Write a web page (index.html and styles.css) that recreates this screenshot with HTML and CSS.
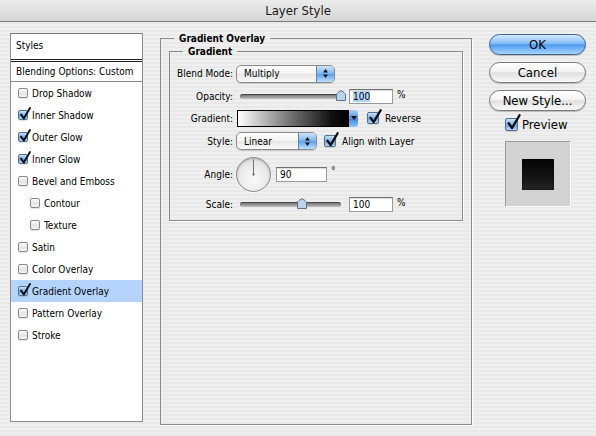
FILE: index.html
```html
<!DOCTYPE html>
<html lang="en">
	<head>
		<meta charset="utf-8" />
		<title>Layer Style</title>
		<link rel="stylesheet" href="styles.css">
	</head>
	<body>
		<div class="titlebar">Layer Style</div>
		<div class="content">
			<div class="style-list">
				<div class="list-head">Styles</div>
				<div class="list-blend">Blending Options: Custom</div>
				<ul class="effects">
					<li><span class="check"></span>Drop Shadow</li>
					<li><span class="check on"><svg viewBox="0 0 12 14"><path d="M2 7.5 L4.8 11.5 L11 1" /></svg></span>Inner Shadow</li>
					<li><span class="check on"><svg viewBox="0 0 12 14"><path d="M2 7.5 L4.8 11.5 L11 1" /></svg></span>Outer Glow</li>
					<li><span class="check on"><svg viewBox="0 0 12 14"><path d="M2 7.5 L4.8 11.5 L11 1" /></svg></span>Inner Glow</li>
					<li><span class="check"></span>Bevel and Emboss</li>
					<li class="sub"><span class="check"></span>Contour</li>
					<li class="sub"><span class="check"></span>Texture</li>
					<li><span class="check"></span>Satin</li>
					<li><span class="check"></span>Color Overlay</li>
					<li class="selected"><span class="check on"><svg viewBox="0 0 12 14"><path d="M2 7.5 L4.8 11.5 L11 1" /></svg></span>Gradient Overlay</li>
					<li><span class="check"></span>Pattern Overlay</li>
					<li><span class="check"></span>Stroke</li>
				</ul>
			</div>

			<fieldset class="panel">
				<legend>Gradient Overlay</legend>
				<fieldset class="group">
					<legend>Gradient</legend>
					<div class="form-grid">
						<label>Blend Mode:</label>
						<div class="ctrl">
							<span class="popup popup-blend">Multiply<span class="stepper"><svg viewBox="0 0 7 11"><path d="M3.5 1 L6 4.5 L1 4.5Z M1 6.5 L6 6.5 L3.5 10Z" /></svg></span></span>
						</div>

						<label>Opacity:</label>
						<div class="ctrl">
							<div class="slider">
								<span class="track"></span>
								<svg class="thumb" style="left: 100px" viewBox="0 0 10 11"><path d="M0.5 10.5 L0.5 5 Q0.5 3.5 2 2.5 L5 0.5 L8 2.5 Q9.5 3.5 9.5 5 L9.5 10.5 Z" /></svg>
							</div>
							<span class="field"><span class="sel">100</span></span>
							<span class="unit">%</span>
						</div>

						<label>Gradient:</label>
						<div class="ctrl">
							<span class="swatch"><span class="ramp"></span><span class="drop"><svg viewBox="0 0 6 4"><path d="M0 0 L6 0 L3 4Z" /></svg></span></span>
							<span class="check big on reverse"><svg viewBox="0 0 12 14"><path d="M2 7.5 L4.8 11.5 L11 1" /></svg></span>
							<span class="opt">Reverse</span>
						</div>

						<label>Style:</label>
						<div class="ctrl">
							<span class="popup popup-style">Linear<span class="stepper"><svg viewBox="0 0 7 11"><path d="M3.5 1 L6 4.5 L1 4.5Z M1 6.5 L6 6.5 L3.5 10Z" /></svg></span></span>
							<span class="check big on align"><svg viewBox="0 0 12 14"><path d="M2 7.5 L4.8 11.5 L11 1" /></svg></span>
							<span class="opt">Align with Layer</span>
						</div>

						<label>Angle:</label>
						<div class="ctrl">
							<span class="dial"><svg viewBox="0 0 35 35"><line x1="17.5" y1="17.5" x2="17.5" y2="1.5" /><rect x="16.5" y="16.5" width="2" height="2" /></svg></span>
							<span class="field field-angle">90</span>
							<span class="deg">°</span>
						</div>

						<label>Scale:</label>
						<div class="ctrl">
							<div class="slider">
								<span class="track"></span>
								<svg class="thumb" style="left: 61px" viewBox="0 0 10 11"><path d="M0.5 10.5 L0.5 5 Q0.5 3.5 2 2.5 L5 0.5 L8 2.5 Q9.5 3.5 9.5 5 L9.5 10.5 Z" /></svg>
							</div>
							<span class="field">100</span>
							<span class="unit">%</span>
						</div>
					</div>
				</fieldset>
			</fieldset>

			<div class="actions">
				<button class="btn btn-default">OK</button>
				<button class="btn">Cancel</button>
				<button class="btn">New Style...</button>
				<div class="preview-toggle">
					<span class="check large on"><svg viewBox="0 0 12 14"><path d="M2 7.5 L4.8 11.5 L11 1" /></svg></span>Preview
				</div>
				<div class="preview-box"><div class="preview-swatch"></div></div>
			</div>
		</div>
	</body>
</html>
```

FILE: styles.css
```css
* {
	box-sizing: border-box;
}
html,
body {
	margin: 0;
	padding: 0;
}
body {
	width: 596px;
	height: 436px;
	overflow: hidden;
	font-family: "DejaVu Sans Condensed", "Liberation Sans", sans-serif;
	font-size: 10px;
	color: #000;
	background: repeating-linear-gradient(#efefef 0 2px, #e9e9e9 2px 4px);
}

/* title bar */
.titlebar {
	height: 22px;
	line-height: 21px;
	text-align: center;
	font-size: 13px;
	color: #1a1a1a;
	background: linear-gradient(#ececec, #d6d6d6);
	border-bottom: 1px solid #7b7b7b;
}

.content {
	display: flex;
	align-items: flex-start;
	padding: 11px 0 0 10px;
}

/* left list */
.style-list {
	width: 133px;
	height: 389px;
	background: #fff;
	border: 1px solid #8d8d8d;
	border-top-color: #777;
}
.list-head {
	height: 28px;
	line-height: 23px;
	padding-left: 5px;
	border-bottom: 3px double #222;
}
.list-blend {
	height: 20px;
	line-height: 19px;
	padding-left: 5px;
	border-bottom: 1px solid #8a8a8a;
}
.effects {
	list-style: none;
	margin: 0;
	padding: 0;
}
.effects li {
	display: flex;
	align-items: center;
	height: 22px;
	padding-left: 7px;
}
.effects li.sub {
	padding-left: 19px;
}
.effects li.selected {
	background: #b5d4fd;
}

/* checkboxes */
.check {
	position: relative;
	flex: none;
	width: 10px;
	height: 10px;
	margin-right: 4px;
	border: 1px solid #8a8a8a;
	border-radius: 2px;
	background: linear-gradient(#fdfdfd, #e4e4e4 55%, #f4f4f4);
	box-shadow: 0 1px 1px rgba(0, 0, 0, 0.12);
}
.check.on {
	border-color: #52708f;
	background: linear-gradient(#c9e1f8, #79b2ec 50%, #5a9be4 51%, #b2d9fb);
}
.check svg {
	position: absolute;
	left: 0;
	top: -4px;
	width: 12px;
	height: 14px;
	overflow: visible;
}
.check svg path {
	fill: none;
	stroke: #0c0c0c;
	stroke-width: 1.9;
	stroke-linecap: round;
	stroke-linejoin: round;
}
.check.big {
	width: 12px;
	height: 12px;
}
.check.big svg {
	width: 14px;
	height: 16px;
	top: -4px;
}
.check.large {
	width: 13px;
	height: 13px;
	margin-right: 4px;
}
.check.large svg {
	width: 15px;
	height: 17px;
	top: -5px;
}

/* main panel */
.panel {
	margin: -1px 0 0 17px;
	padding: 0 8px;
	width: 312px;
	height: 393px;
	border: 1px solid #8c8c8c;
	box-shadow: 1px 1px 0 #fff;
	min-inline-size: 0;
}
.panel legend,
.group legend {
	font-weight: bold;
	line-height: 13px;
	padding: 0 5px;
}
.panel > legend {
	margin-left: 5px;
}
.group {
	margin: 0;
	padding: 6px 0 5px 0;
	border: 1px solid #8c8c8c;
	box-shadow: 1px 1px 0 #fff;
	min-inline-size: 0;
}
.group > legend {
	margin-left: 13px;
}
.form-grid {
	display: grid;
	grid-template-columns: 63px auto;
	grid-template-rows: 19px 26px 18px 28px 38px 22px;
	column-gap: 3px;
	align-items: center;
}
.form-grid label {
	text-align: right;
}
.ctrl {
	display: flex;
	align-items: center;
}

/* popup menus */
.popup {
	display: flex;
	justify-content: space-between;
	align-items: center;
	height: 18px;
	padding-left: 7px;
	border: 1px solid #8a8a8a;
	border-radius: 5px;
	overflow: hidden;
	background: linear-gradient(#ffffff, #f3f3f3 50%, #e6e6e6 51%, #fbfbfb);
	box-shadow: 0 1px 1px rgba(0, 0, 0, 0.15);
}
.popup-blend {
	width: 99px;
}
.popup-style {
	width: 81px;
}
.stepper {
	display: flex;
	align-items: center;
	justify-content: center;
	width: 18px;
	height: 100%;
	border-left: 1px solid #5f83b4;
	background: linear-gradient(#cfe4fa, #7bb4ef 50%, #5a9fe9 51%, #bfe0ff);
}
.stepper svg {
	width: 7px;
	height: 11px;
}
.stepper path {
	fill: #111;
}

/* sliders */
.slider {
	position: relative;
	display: flex;
	align-items: center;
	width: 109px;
	height: 14px;
}
.track {
	display: block;
	width: 101px;
	height: 5px;
	margin-left: 4px;
	border-radius: 3px;
	background: linear-gradient(#6b6b6b, #9a9a9a 60%, #c4c4c4);
	box-shadow: inset 0 1px 1px rgba(0, 0, 0, 0.4);
}
.thumb {
	position: absolute;
	top: 1px;
	width: 10px;
	height: 11px;
}
.thumb path {
	fill: #bcd3ec;
	stroke: #5c708a;
	stroke-width: 1;
}

/* text fields */
.field {
	display: block;
	width: 44px;
	height: 15px;
	margin-left: 4px;
	padding-left: 3px;
	line-height: 13px;
	background: #fff;
	border: 1px solid #9a9a9a;
	border-top-color: #6f6f6f;
	box-shadow: inset 0 1px 1px rgba(0, 0, 0, 0.15);
}
.field-angle {
	width: 51px;
	margin-left: 5px;
}
.sel {
	background: #b5d4fd;
}
.unit {
	margin: 0 0 4px 4px;
}
.deg {
	margin: 0 0 8px 4px;
}

/* gradient swatch */
.swatch {
	display: flex;
	width: 121px;
	height: 17px;
	margin-left: 1px;
}
.ramp {
	flex: 1;
	border: 1px solid #000;
	background: linear-gradient(to right, #fff, #7a7a7a 45%, #111 85%, #000);
}
.drop {
	display: flex;
	align-items: center;
	justify-content: center;
	width: 9px;
	border-radius: 0 3px 3px 0;
	background: linear-gradient(#a9cdf3, #4f91e0 50%, #3f84da 51%, #8cc2f6);
}
.drop svg {
	width: 6px;
	height: 4px;
}
.drop path {
	fill: #111;
}
.reverse {
	margin-left: 9px;
	margin-right: 6px;
}
.align {
	margin-left: 7px;
	margin-right: 6px;
}

/* angle dial */
.dial {
	display: block;
	width: 35px;
	height: 35px;
	border-radius: 50%;
	border: 1px solid #8b8b8b;
	background: radial-gradient(circle at 50% 65%, #fbfbfb, #e4e4e4 70%, #d2d2d2);
	box-shadow: inset 0 1px 2px rgba(0, 0, 0, 0.25), 0 1px 1px rgba(255, 255, 255, 0.9);
}
.dial svg {
	display: block;
	width: 33px;
	height: 33px;
}
.dial line {
	stroke: #6b6b6b;
	stroke-width: 1;
}
.dial rect {
	fill: #555;
}

/* right column */
.actions {
	width: 97px;
	margin-left: 17px;
	padding-top: 1px;
	display: flex;
	flex-direction: column;
	gap: 7px;
}
.btn {
	height: 21px;
	padding: 0;
	font-family: "DejaVu Sans Condensed", "Liberation Sans", sans-serif;
	font-size: 13px;
	color: #000;
	border: 1px solid #7a7a7a;
	border-radius: 11px;
	background: linear-gradient(#ffffff, #f4f4f4 45%, #e0e0e0 52%, #f9f9f9);
	box-shadow: 0 1px 1px rgba(0, 0, 0, 0.2);
}
.btn-default {
	border-color: #41618f;
	background: linear-gradient(#d5e9fd, #84bdf5 45%, #4f9af0 52%, #a6d6ff);
}
.preview-toggle {
	display: flex;
	align-items: center;
	margin: -1px 0 0 16px;
	height: 15px;
	font-size: 13px;
}
.preview-box {
	display: flex;
	align-items: center;
	justify-content: center;
	width: 66px;
	height: 66px;
	margin: 2px 0 0 16px;
	background: #d2d2d2;
	border: 1px solid #fff;
	border-top-color: #9a9a9a;
	border-left-color: #9a9a9a;
}
.preview-swatch {
	width: 32px;
	height: 31px;
	background: linear-gradient(#050505, #141414 60%, #262626);
	box-shadow: inset 0 0 2px #000;
}
```
